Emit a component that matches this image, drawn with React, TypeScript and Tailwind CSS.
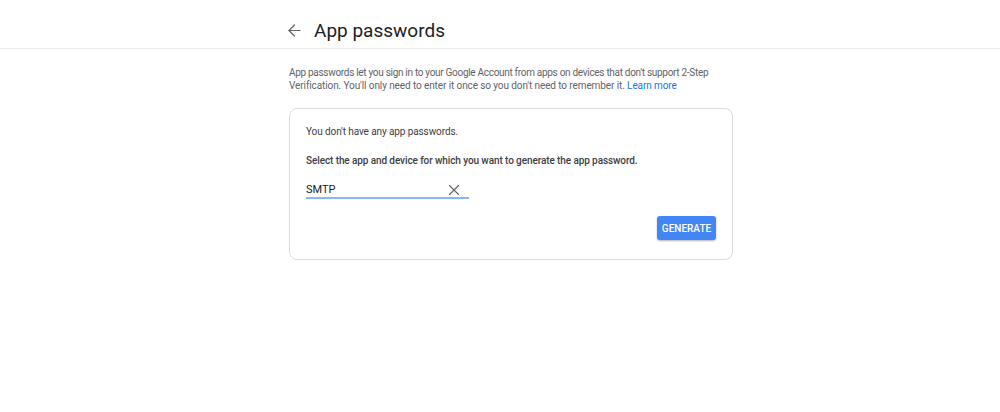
import { ArrowLeft, X } from 'lucide-react';

export default function App() {
  return (
    <div className="w-[1000px] h-[412px] bg-white font-['Roboto',sans-serif] text-[#3c4043]">
      {/* Header */}
      <div className="h-[49px] border-b border-[#ebebeb] flex items-center pl-[285px] pt-[12px]">
        <ArrowLeft className="w-[19px] h-[19px] text-[#5f6368]" strokeWidth={1.5} />
        <h1 className="ml-[10px] text-[19px] leading-none text-[#202124]">App passwords</h1>
      </div>

      <div className="w-[444px] ml-[289px]">
        <p className="mt-[17px] text-[10px] leading-[13px] text-[#5f6368] whitespace-nowrap">
          <span className="tracking-[-0.3px]">
            App passwords let you sign in to your Google Account from apps on devices that don't support 2-Step
          </span>
          <br />
          <span className="tracking-[-0.1px]">
            Verification. You'll only need to enter it once so you don't need to remember it.{' '}
            <a className="text-[#1a73e8]">Learn more</a>
          </span>
        </p>

        <div className="mt-[16px] border border-[#dadce0] rounded-[8px] px-[16px] pt-[16px] pb-[19px]">
          <p className="text-[10px] leading-[13px] tracking-[-0.1px] text-[#3c4043]">You don't have any app passwords.</p>
          <p className="mt-[16px] text-[10px] leading-[13px] tracking-[-0.1px] font-medium text-[#3c4043]">
            Select the app and device for which you want to generate the app password.
          </p>
          <div className="mt-[16px] w-[163px] h-[16px] flex items-center justify-between border-b-2 border-[#8ab4f8]">
            <span className="text-[11px] leading-[14px] text-[#202124]">SMTP</span>
            <X className="w-[18px] h-[18px] mr-[6px] text-[#5f6368]" strokeWidth={1.5} />
          </div>
          <div className="mt-[17px] flex justify-end">
            <button className="h-[24px] w-[59px] rounded-[3px] bg-[#4285f4] text-white text-[10px] font-medium shadow-[0_1px_2px_rgba(0,0,0,0.3)]">
              GENERATE
            </button>
          </div>
        </div>
      </div>
    </div>
  );
}
